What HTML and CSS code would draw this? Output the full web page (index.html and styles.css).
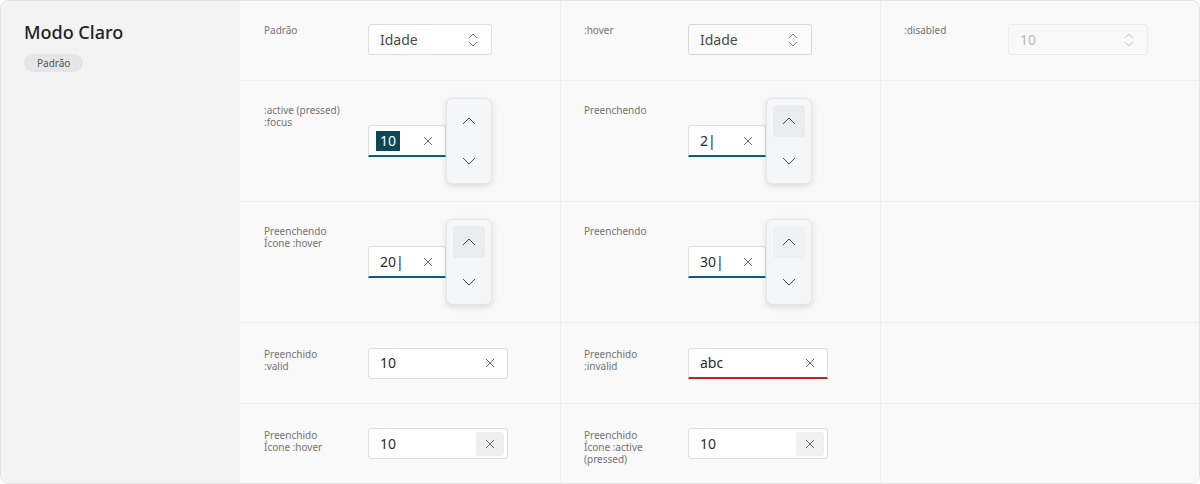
FILE: index.html
```html
<!DOCTYPE html>
<html lang="pt-BR">
<head>
<meta charset="utf-8">
<title>Modo Claro</title>
<link rel="stylesheet" href="styles.css">
</head>
<body>
<div class="panel">
  <aside class="side">
    <h1 class="title">Modo Claro</h1>
    <span class="badge">Padrão</span>
  </aside>
  <div class="grid">
    <!-- row 1 -->
    <div class="cell first">
      <div class="label">Padrão</div>
      <div class="select">
        <span class="val">Idade</span>
        <svg class="updown" width="10" height="14" viewBox="0 0 10 14"><path d="M1 5 L5 1 L9 5 M1 9 L5 13 L9 9"/></svg>
      </div>
    </div>
    <div class="cell first col">
      <div class="label">:hover</div>
      <div class="select hover">
        <span class="val">Idade</span>
        <svg class="updown" width="10" height="14" viewBox="0 0 10 14"><path d="M1 5 L5 1 L9 5 M1 9 L5 13 L9 9"/></svg>
      </div>
    </div>
    <div class="cell first col">
      <div class="label">:disabled</div>
      <div class="select disabled wide">
        <span class="val">10</span>
        <svg class="updown" width="10" height="14" viewBox="0 0 10 14"><path d="M1 5 L5 1 L9 5 M1 9 L5 13 L9 9"/></svg>
      </div>
    </div>

    <!-- row 2 -->
    <div class="cell row">
      <div class="label">:active (pressed)<br>:focus</div>
      <div class="spin-field">
        <div class="field focus short">
          <span class="val"><span class="sel">10</span></span>
          <span class="clear"><svg width="10" height="10" viewBox="0 0 10 10"><path d="M1 1 L9 9 M9 1 L1 9"/></svg></span>
        </div>
        <div class="spinner">
          <span class="sbtn"><svg width="14" height="14" viewBox="0 0 14 14"><path d="M1 10 L7 4 L13 10"/></svg></span>
          <span class="sbtn"><svg width="14" height="14" viewBox="0 0 14 14"><path d="M1 4 L7 10 L13 4"/></svg></span>
        </div>
      </div>
    </div>
    <div class="cell row col">
      <div class="label">Preenchendo</div>
      <div class="spin-field">
        <div class="field focus short">
          <span class="val">2|</span>
          <span class="clear"><svg width="10" height="10" viewBox="0 0 10 10"><path d="M1 1 L9 9 M9 1 L1 9"/></svg></span>
        </div>
        <div class="spinner">
          <span class="sbtn on"><svg width="14" height="14" viewBox="0 0 14 14"><path d="M1 10 L7 4 L13 10"/></svg></span>
          <span class="sbtn"><svg width="14" height="14" viewBox="0 0 14 14"><path d="M1 4 L7 10 L13 4"/></svg></span>
        </div>
      </div>
    </div>
    <div class="cell row col"></div>

    <!-- row 3 -->
    <div class="cell row">
      <div class="label">Preenchendo<br>Ícone :hover</div>
      <div class="spin-field">
        <div class="field focus short">
          <span class="val">20|</span>
          <span class="clear"><svg width="10" height="10" viewBox="0 0 10 10"><path d="M1 1 L9 9 M9 1 L1 9"/></svg></span>
        </div>
        <div class="spinner">
          <span class="sbtn on"><svg width="14" height="14" viewBox="0 0 14 14"><path d="M1 10 L7 4 L13 10"/></svg></span>
          <span class="sbtn"><svg width="14" height="14" viewBox="0 0 14 14"><path d="M1 4 L7 10 L13 4"/></svg></span>
        </div>
      </div>
    </div>
    <div class="cell row col">
      <div class="label">Preenchendo</div>
      <div class="spin-field">
        <div class="field focus short">
          <span class="val">30|</span>
          <span class="clear"><svg width="10" height="10" viewBox="0 0 10 10"><path d="M1 1 L9 9 M9 1 L1 9"/></svg></span>
        </div>
        <div class="spinner">
          <span class="sbtn on light"><svg width="14" height="14" viewBox="0 0 14 14"><path d="M1 10 L7 4 L13 10"/></svg></span>
          <span class="sbtn"><svg width="14" height="14" viewBox="0 0 14 14"><path d="M1 4 L7 10 L13 4"/></svg></span>
        </div>
      </div>
    </div>
    <div class="cell row col"></div>

    <!-- row 4 -->
    <div class="cell row">
      <div class="label low">Preenchido<br>:valid</div>
      <div class="field wide">
        <span class="val">10</span>
        <span class="clear"><svg width="10" height="10" viewBox="0 0 10 10"><path d="M1 1 L9 9 M9 1 L1 9"/></svg></span>
      </div>
    </div>
    <div class="cell row col">
      <div class="label low">Preenchido<br>:invalid</div>
      <div class="field wide invalid">
        <span class="val">abc</span>
        <span class="clear"><svg width="10" height="10" viewBox="0 0 10 10"><path d="M1 1 L9 9 M9 1 L1 9"/></svg></span>
      </div>
    </div>
    <div class="cell row col"></div>

    <!-- row 5 -->
    <div class="cell row">
      <div class="label low">Preenchido<br>Ícone :hover</div>
      <div class="field wide">
        <span class="val">10</span>
        <span class="clear hov"><svg width="10" height="10" viewBox="0 0 10 10"><path d="M1 1 L9 9 M9 1 L1 9"/></svg></span>
      </div>
    </div>
    <div class="cell row col">
      <div class="label low">Preenchido<br>Ícone :active<br>(pressed)</div>
      <div class="field wide">
        <span class="val">10</span>
        <span class="clear act"><svg width="10" height="10" viewBox="0 0 10 10"><path d="M1 1 L9 9 M9 1 L1 9"/></svg></span>
      </div>
    </div>
    <div class="cell row col"></div>
  </div>
</div>
</body>
</html>
```

FILE: styles.css
```css
* { box-sizing: border-box; }

html, body {
  margin: 0;
  padding: 0;
  background: #ffffff;
}

body {
  font-family: "Noto Sans", "Open Sans", "DejaVu Sans", sans-serif;
  color: #333;
}

.panel {
  display: flex;
  width: 1200px;
  height: 484px;
  border: 1px solid #e4e4e4;
  border-radius: 8px;
  overflow: hidden;
  background: #f9f9f9;
}

.side {
  width: 239px;
  flex: none;
  background: #f3f3f3;
  padding: 19px 0 0 23px;
  display: flex;
  flex-direction: column;
  align-items: flex-start;
}

.title {
  margin: 0;
  font-size: 18px;
  line-height: 24px;
  font-weight: 500;
  color: #222;
}

.badge {
  margin-top: 10px;
  height: 18px;
  line-height: 18px;
  padding: 0 13px;
  border-radius: 9px;
  background: #e6e6e6;
  color: #555;
  font-size: 10px;
}

.grid {
  flex: 1;
  display: grid;
  grid-template-columns: 320px 320px 1fr;
  grid-template-rows: 79px 121px 121px 81px 1fr;
  background: #f9f9f9;
}

.cell {
  display: flex;
  align-items: center;
  padding: 0 0 0 24px;
  min-width: 0;
}

.cell.first {
  padding-bottom: 2px;
}

.cell.col {
  border-left: 1px solid #efefef;
  padding-left: 23px;
}

.cell.row {
  border-top: 1px solid #efefef;
}

.label {
  align-self: flex-start;
  margin-top: 23px;
  width: 104px;
  flex: none;
  font-size: 10px;
  line-height: 12px;
  color: #737373;
}

.label.low {
  margin-top: 25px;
}

/* select */
.select {
  width: 124px;
  height: 31px;
  display: flex;
  align-items: center;
  justify-content: space-between;
  padding: 0 13px 0 11px;
  background: #fff;
  border: 1px solid #dddddd;
  border-radius: 3px;
  font-size: 14px;
  color: #4a4a4a;
}

.select.hover {
  background: #fbfbfb;
  border-color: #d8d8d8;
}

.select.wide {
  width: 140px;
}

.select.disabled {
  background: #f9f9f9;
  border-color: #ececec;
  color: #b8b8b8;
}

.updown path {
  fill: none;
  stroke: #777;
  stroke-width: 1;
}

.select.disabled .updown path {
  stroke: #c8c8c8;
}

/* input fields */
.field {
  height: 31px;
  display: flex;
  align-items: center;
  justify-content: space-between;
  padding: 0 3px 0 11px;
  background: #fff;
  border: 1px solid #dedede;
  border-radius: 3px;
  font-size: 14px;
  color: #2a2a2a;
}

.field.wide {
  width: 140px;
}

.field.short {
  width: 78px;
  height: 32px;
}

.field.focus {
  border-bottom: 2px solid #0a6275;
  border-radius: 3px 3px 0 0;
}

.field.invalid {
  border-bottom: 2px solid #c4261d;
  border-radius: 3px 3px 0 0;
}

.val {
  line-height: 20px;
  white-space: nowrap;
}

.sel {
  display: inline-block;
  background: #0c4657;
  color: #fff;
  padding: 0 4px;
  margin-left: -4px;
  line-height: 20px;
}

.clear {
  width: 28px;
  height: 24px;
  flex: none;
  display: flex;
  align-items: center;
  justify-content: center;
  border-radius: 3px;
}

.clear path {
  fill: none;
  stroke: #6a6a6a;
  stroke-width: 1;
}

.clear.hov {
  background: #eeeeee;
}

.clear.act {
  background: #f0f0f0;
}

/* spinner */
.spin-field {
  display: flex;
  align-items: center;
}

.spinner {
  width: 46px;
  height: 86px;
  flex: none;
  display: flex;
  flex-direction: column;
  gap: 8px;
  padding: 6px;
  background: #f4f6f7;
  border: 1px solid #e3e5e6;
  border-radius: 6px;
  box-shadow: 0 2px 6px rgba(0, 0, 0, 0.12);
}

.sbtn {
  width: 32px;
  height: 32px;
  display: flex;
  align-items: center;
  justify-content: center;
  border-radius: 3px;
}

.sbtn.on {
  background: #eaeced;
}

.sbtn.light {
  background: #eef0f1;
}

.sbtn path {
  fill: none;
  stroke: #444;
  stroke-width: 1;
}
```
